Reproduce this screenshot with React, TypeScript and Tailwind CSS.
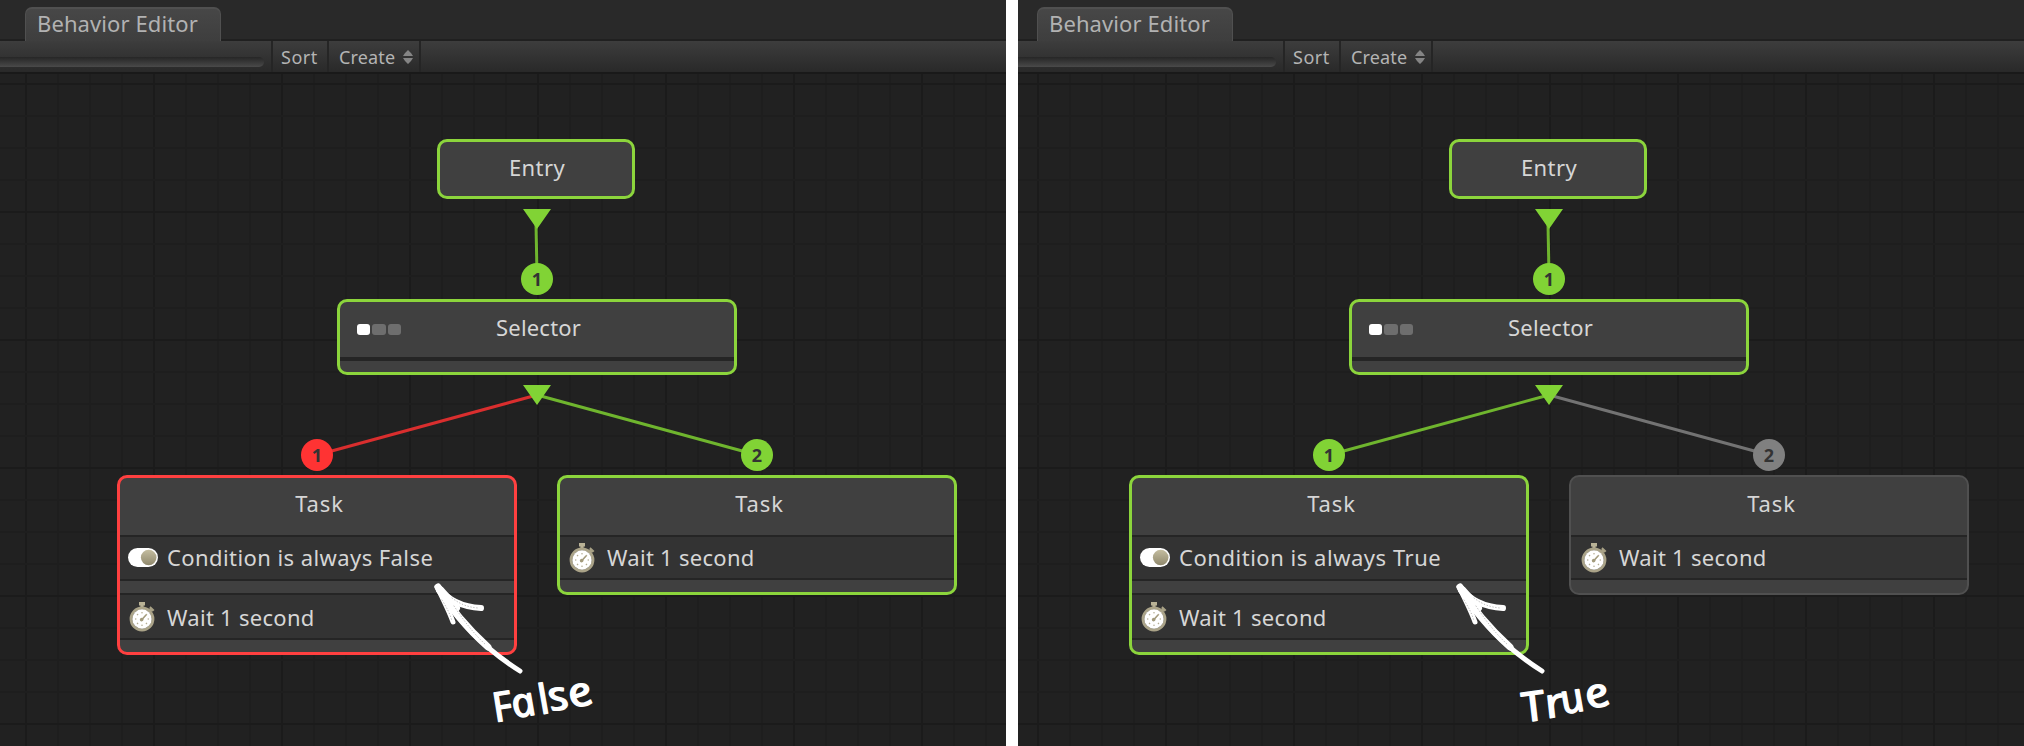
import type { ReactNode } from "react";

type Tone = "green" | "red" | "gray";

const BORDER: Record<Tone, string> = {
  green: "border-[3px] border-[#8cd53c]",
  red: "border-[3px] border-[#ff4040]",
  gray: "border-2 border-[#505050]",
};
const FILL: Record<Tone, string> = { green: "#81d335", red: "#ff3333", gray: "#808080" };
const LINE: Record<Tone, string> = { green: "#6fb52e", red: "#d92e2e", gray: "#737373" };

function Stopwatch() {
  return (
    <svg className="block" width="26" height="31" viewBox="0 0 26 31">
      <path d="M10 1h6v3.500h-1.400v3h-3.200v-3H10z" fill="#b9b296" />
      <path d="M21.500 5.200l4 3.800-1.700 1.600-1.200-.4-1.800 2-2.200-2 2-1.900-.2-1.500z" fill="#a8a185" />
      <circle cx="13" cy="18" r="11" fill="none" stroke="#aaa388" strokeWidth="2.800" />
      <circle cx="13" cy="18" r="9.700" fill="#fff" />
      {[0, 45, 90, 135, 180, 225, 270, 315].map((a) => (
        <circle key={a} cx="13" cy="11.700" r=".8" fill="#b5ae94" transform={`rotate(${a} 13 18)`} />
      ))}
      <path d="M12 19.500l4.800-5.200" stroke="#a39b7c" strokeWidth="1.600" strokeLinecap="round" />
      <circle cx="12.700" cy="18.600" r="1.800" fill="#a39b7c" />
    </svg>
  );
}

function Toggle() {
  return (
    <svg className="block" width="30" height="20" viewBox="0 0 30 20">
      <defs>
        <linearGradient id="knob" x1="0" y1="0" x2="0" y2="1">
          <stop offset="0" stopColor="#c4bda0" />
          <stop offset="1" stopColor="#8f886c" />
        </linearGradient>
      </defs>
      <rect x="0" y="0" width="30" height="19" rx="9.500" fill="#fff" />
      <circle cx="20.700" cy="9.500" r="7.800" fill="url(#knob)" />
    </svg>
  );
}

function Node({ tone, className, children }: { tone: Tone; className: string; children: ReactNode }) {
  return (
    <div className={`absolute flex flex-col overflow-hidden rounded-[10px] bg-[#404040] text-[22px] leading-[30px] text-[#d6d6d6] ${BORDER[tone]} ${className}`}>
      {children}
    </div>
  );
}

function Row({ icon, children, className = "", textClass = "" }: { icon: ReactNode; children: ReactNode; className?: string; textClass?: string }) {
  return (
    <div className={`flex shrink-0 items-center border-y-2 border-[#252525] bg-[#333333] ${className}`}>
      <div className="flex w-[47px] shrink-0 pl-2">{icon}</div>
      <span className={textClass}>{children}</span>
    </div>
  );
}

function Badge({ tone, n, className }: { tone: Tone; n: number; className: string }) {
  return (
    <div
      className={`absolute flex size-8 items-center justify-center rounded-full text-[18px] font-bold text-[#333] ${className}`}
      style={{ backgroundColor: FILL[tone] }}
    >
      {n}
    </div>
  );
}

function Panel({ word, first, second, children, shift }: { word: string; first: Tone; second: Tone; children: ReactNode; shift: string }) {
  const conditionTracking = word === "False" ? "pb-[2px] tracking-[0.42px]" : "pb-[2px] tracking-[0.53px]";
  return (
    <section className="relative h-[746px] w-[1006px] shrink-0 overflow-hidden bg-[#212121]">
      <div className={`flex h-full w-[1018px] flex-col ${shift}`}>
        <header className="flex h-[41px] shrink-0 items-end border-b-2 border-[#202020] bg-[#292929] pl-[25px]">
          <div className="-mb-[2px] flex h-[34px] w-[196px] items-center rounded-t-[7px] border-x border-t-2 border-[#505050] bg-linear-to-b from-[#474747] to-[#3e3e3e] pb-[4px] pl-[11px] text-[22px] leading-[28px] text-[#b2b2b2]">
            <span className="tracking-[0.1px]">Behavior Editor</span>
          </div>
        </header>
        <div className="flex h-[33px] shrink-0 border-b-2 border-[#191919] bg-linear-to-b from-[#3d3d3d] to-[#292929] text-[18px] leading-[32px] text-[#b4b4b4]">
          <div className="flex w-[271px] pt-4">
            <div className="h-[10px] w-[264px] rounded-r-[6px] bg-linear-to-b from-[#262626] to-[#4a4a4a]" />
          </div>
          <div className="w-[56px] border-l-2 border-[#252525] pl-[8px] tracking-[0.5px]">Sort</div>
          <div className="flex w-[94px] items-center border-x-2 border-[#252525] pl-[10px] tracking-[0.15px]">
            Create
            <svg className="ml-[8px]" width="10" height="14" viewBox="0 0 10 14">
              <path d="M5 0l3 3 2 3H0l2-3zM5 14l3-3 2-3H0l2 3z" fill="#858585" />
            </svg>
          </div>
        </div>
        <div className="relative min-h-0 flex-1">
          <svg className="absolute inset-0" width="1018" height="672">
            {Array.from({ length: 32 }, (_, i) => (
              <rect key={`v${i}`} x={25 + 32 * i} y="0" width="2" height="672" fill={i % 4 === 0 ? "#1b1b1b" : "#1e1e1e"} />
            ))}
            {Array.from({ length: 21 }, (_, i) => (
              <rect key={`h${i}`} x="0" y={9 + 32 * i} width="1018" height="2" fill={i % 4 === 0 ? "#1b1b1b" : "#1e1e1e"} />
            ))}
            <path d="M536 150L537 200" stroke={LINE.green} strokeWidth="3" />
            <path d="M537 321L317 381" stroke={LINE[first]} strokeWidth="3" />
            <path d="M537 321L757 381" stroke={LINE[second]} strokeWidth="3" />
            <path d="M523 135h28l-14 20zM523 311h28l-14 20z" fill={FILL.green} />
          </svg>

          <Node tone="green" className="left-[437px] top-[65px] h-[60px] w-[198px] items-center pt-[10px]">
            <span className="pl-[2px] tracking-[0.4px]">Entry</span>
          </Node>
          <Badge tone="green" n={1} className="left-[521px] top-[189px]" />
          <Node tone="green" className="left-[337px] top-[225px] h-[76px] w-[400px]">
            <div className="flex h-[59px] shrink-0 items-start border-b-4 border-[#252525] pt-[10px]">
              <div className="flex w-[156px] gap-[2px] pl-[17px] pt-[12px]">
                <i className="h-[11px] w-[13px] rounded-[3px] bg-white" />
                <i className="h-[11px] w-[14px] rounded-[3px] bg-[#6e6e6e]" />
                <i className="h-[11px] w-[13px] rounded-[3px] bg-[#6e6e6e]" />
              </div>
              <span className="tracking-[0.2px]">Selector</span>
            </div>
          </Node>

          <Badge tone={first} n={1} className="left-[301px] top-[365px]" />
          <Node tone={first} className="left-[117px] top-[401px] h-[180px] w-[400px]">
            <div className="h-[57px] shrink-0 pl-[5px] pt-[10px] text-center tracking-[0.9px]">Task</div>
            <Row icon={<Toggle />} className="h-[46px]" textClass={conditionTracking}>Condition is always {word}</Row>
            <Row icon={<span className="pl-px"><Stopwatch /></span>} className="mt-[12px] h-[47px]" textClass="tracking-[0.28px]">Wait 1 second</Row>
          </Node>

          <Badge tone={second} n={2} className="left-[741px] top-[365px]" />
          <Node tone={second} className="left-[557px] top-[401px] h-[120px] w-[400px]">
            <div className={`shrink-0 pl-[5px] text-center tracking-[0.9px] ${second === "gray" ? "h-[58px] pt-[11px]" : "h-[57px] pt-[10px]"}`}>Task</div>
            <Row icon={<span className={second === "gray" ? "pl-[2px]" : "pl-px"}><Stopwatch /></span>} className="h-[45px]" textClass={second === "gray" ? "pb-px pl-px tracking-[0.28px]" : "pb-px tracking-[0.28px]"}>Wait 1 second</Row>
          </Node>
          {children}
        </div>
      </div>
    </section>
  );
}

type Glyph = { c: string; x: number; y: number; r: number; sx?: number };

function Annotation({ glyphs, arrow }: { glyphs: Glyph[]; arrow: number }) {
  return (
    <svg className="absolute inset-0" width="1018" height="672" fill="none" stroke="#fff" strokeLinecap="round" strokeLinejoin="round">
      <g transform={`translate(${arrow} -74)`}>
        <path d="M438 587C455 617 482 647 520 671" strokeWidth="5" />
        <path d="M438 587C450 608 467 628 488 647" strokeWidth="7" />
        <path d="M438 587C447 599 460 607 481 608" strokeWidth="6" />
        <path d="M437 587C443 599 449 611 453 622" strokeWidth="5" />
        <path d="M440 590L456 608" strokeWidth="8" />
        <path d="M442 600C447 608 450 614 452 621M452 598C460 604 467 607 478 608M454 606C464 621 474 634 486 645" stroke="#8a8a8a" strokeWidth=".6" strokeDasharray=".5 2.500" />
      </g>
      <g fill="#fff" strokeWidth="1.300" fontSize="41" fontFamily="'Noto Sans', sans-serif" fontStyle="italic">
        {glyphs.map((g, i) => (
          <text key={i} transform={`translate(${g.x} ${g.y - 74}) rotate(${g.r}) skewX(12) scale(${g.sx ?? 1} 1)`}>{g.c}</text>
        ))}
      </g>
    </svg>
  );
}

const FALSE_GLYPHS: Glyph[] = [
  { c: "F", x: 497, y: 722, r: -9, sx: 1 },
  { c: "a", x: 516, y: 718, r: -10, sx: 1.02 },
  { c: "l", x: 543, y: 714, r: -10, sx: 1 },
  { c: "s", x: 553, y: 711, r: -10, sx: 1.1 },
  { c: "e", x: 573, y: 708, r: -12, sx: 1.18 },
];
const TRUE_GLYPHS: Glyph[] = [
  { c: "T", x: 514, y: 722, r: -8, sx: 1.12 },
  { c: "r", x: 537, y: 718, r: -8, sx: 1.15 },
  { c: "u", x: 553, y: 714, r: -10, sx: 1 },
  { c: "e", x: 578, y: 709, r: -12, sx: 1.18 },
];

export default function App() {
  return (
    <main className="flex h-[746px] w-[2024px] gap-3 overflow-hidden bg-white font-['Noto_Sans',sans-serif]">
      <Panel word="False" first="red" second="green" shift="">
        <Annotation glyphs={FALSE_GLYPHS} arrow={0} />
      </Panel>
      <Panel word="True" first="green" second="gray" shift="-ml-[6px]">
        <Annotation glyphs={TRUE_GLYPHS} arrow={10} />
      </Panel>
    </main>
  );
}
